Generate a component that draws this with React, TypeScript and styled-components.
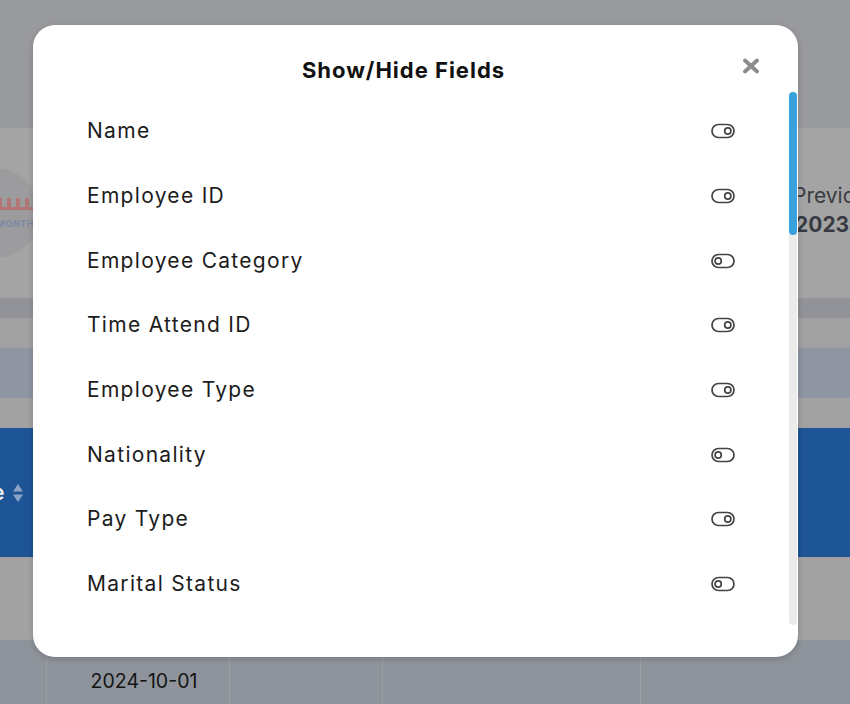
import React from "react";
import styled, { createGlobalStyle } from "styled-components";

const FONT = `Inter, "Open Sans", "Liberation Sans", sans-serif`;

const Global = createGlobalStyle`
  html, body { margin: 0; padding: 0; }
  body { font-family: ${FONT}; overflow: hidden; }
  #root { width: 850px; height: 704px; overflow: hidden; position: relative; }
`;

/* ---------- dimmed page behind the modal ---------- */
const Page = styled.div`
  width: 850px;
  height: 704px;
  display: flex;
  flex-direction: column;
  background: #999a9d;
`;

const Band = styled.div<{ $h: number; $bg: string }>`
  height: ${(p) => p.$h}px;
  flex: 0 0 auto;
  background: ${(p) => p.$bg};
`;

const CardRow = styled.div`
  height: 170px;
  flex: 0 0 auto;
  display: flex;
  align-items: center;
  justify-content: space-between;
  background: #a4a4a5;
  overflow: hidden;
`;

const LogoCircle = styled.div`
  width: 90px;
  height: 90px;
  margin-left: -50px;
  border-radius: 50%;
  background: #9c9c9e;
  display: flex;
  flex-direction: column;
  align-items: flex-end;
  justify-content: center;
  padding-right: 6px;
  box-sizing: border-box;
  gap: 8px;
`;

const LogoCrown = styled.div`
  width: 36px;
  height: 9px;
  border-bottom: 3px solid #b27676;
  background: repeating-linear-gradient(90deg, #b27676 0 4px, transparent 4px 9px);
`;

const LogoText = styled.span`
  font-size: 9px;
  font-weight: 700;
  color: #7d8aa6;
  letter-spacing: 0.5px;
`;

const Prev = styled.div`
  width: 57px;
  margin-top: -6px;
  display: flex;
  flex-direction: column;
  gap: 4px;
  white-space: nowrap;
  color: #383b42;
  font-size: 21px;
  overflow: hidden;
`;

const PrevYear = styled.span`
  font-weight: 700;
  margin-left: 2px;
`;

const SplitBand = styled.div`
  height: 110px;
  flex: 0 0 auto;
  display: flex;
  flex-direction: column;
  background: #a1a1a2;
`;

const SubBand = styled.div`
  margin-top: 30px;
  height: 50px;
  background: #8f95a1;
`;

const BlueHeader = styled.div`
  height: 129px;
  flex: 0 0 auto;
  background: #1d5597;
  display: flex;
  align-items: center;
  gap: 8px;
  color: #f2f2f2;
  font-size: 21px;
  font-weight: 600;
  overflow: hidden;
`;

const HeaderText = styled.span`
  margin-left: -8px;
`;

const TableRow = styled.div`
  height: 64px;
  flex: 0 0 auto;
  display: grid;
  grid-template-columns: 47px 183px 153px 258px 1fr;
  background: #8f949c;
`;

const Cell = styled.div`
  border-right: 1px solid #9a9ea5;
  display: flex;
  align-items: flex-start;
  justify-content: center;
  padding-top: 29px;
  color: #141414;
  font-size: 19.5px;
  line-height: 24px;
  &:last-child { border-right: none; }
`;

const DateCell = styled(Cell)`
  padding-left: 12px;
`;

/* ---------- modal ---------- */
const Modal = styled.div`
  position: absolute;
  left: 33px;
  top: 25px;
  width: 765px;
  height: 632px;
  background: #ffffff;
  border-radius: 22px;
  box-shadow: 0 2px 6px rgba(0, 0, 0, 0.18);
  display: flex;
  flex-direction: column;
  box-sizing: border-box;
  padding-bottom: 32px;
`;

const Header = styled.div`
  height: 67px;
  flex: 0 0 auto;
  display: flex;
  align-items: flex-start;
  justify-content: center;
  padding-top: 31px;
  box-sizing: border-box;
  position: relative;
`;

const Title = styled.h2`
  margin: 0 24px 0 0;
  font-size: 22px;
  line-height: 28px;
  font-weight: 700;
  color: #111111;
  letter-spacing: 1px;
`;

const CloseBtn = styled.button`
  position: absolute;
  right: 37px;
  top: 31px;
  width: 20px;
  height: 20px;
  padding: 0;
  border: none;
  background: transparent;
  display: flex;
  align-items: center;
  justify-content: center;
  cursor: pointer;
`;

const Body = styled.div`
  flex: 1 1 auto;
  display: flex;
  min-height: 0;
`;

const List = styled.ul`
  list-style: none;
  margin: 0;
  padding: 7px 0 0 54px;
  flex: 1 1 auto;
  display: flex;
  flex-direction: column;
`;

const Row = styled.li`
  height: 64.7px;
  flex: 0 0 auto;
  display: flex;
  align-items: center;
  justify-content: space-between;
  padding-right: 53px;
`;

const Label = styled.span`
  font-size: 21px;
  font-weight: 400;
  color: #1c1c1c;
  letter-spacing: 1.3px;
  line-height: 24px;
`;

const Track = styled.div`
  width: 8px;
  margin-right: 1px;
  flex: 0 0 auto;
  background: #ebebeb;
  border-radius: 4px;
  display: flex;
  flex-direction: column;
`;

const Thumb = styled.div`
  height: 143px;
  background: #37a2dc;
  border-radius: 4px;
`;

const Toggle: React.FC<{ on: boolean }> = ({ on }) => (
  <svg width="26" height="16" viewBox="0 0 26 16" aria-hidden="true">
    <rect x="2" y="1.5" width="22" height="13" rx="6.5" fill="none" stroke="#444" strokeWidth="1.7" />
    <circle cx={on ? 17.8 : 8.2} cy="8" r="3.1" fill="none" stroke="#444" strokeWidth="1.7" />
  </svg>
);

const CloseIcon = () => (
  <svg width="18" height="16" viewBox="0 0 18 16" aria-hidden="true">
    <path d="M3 2.5 L15 13.5 M15 2.5 L3 13.5" stroke="#8b8b8b" strokeWidth="3.8" strokeLinecap="round" />
  </svg>
);

const SortIcon = () => (
  <svg width="12" height="20" viewBox="0 0 12 20" aria-hidden="true">
    <path d="M6 1 L11 8.5 H1 Z M6 19 L11 11.5 H1 Z" fill="#8aa3c6" />
  </svg>
);

const fields: { name: string; on: boolean }[] = [
  { name: "Name", on: true },
  { name: "Employee ID", on: true },
  { name: "Employee Category", on: false },
  { name: "Time Attend ID", on: true },
  { name: "Employee Type", on: true },
  { name: "Nationality", on: false },
  { name: "Pay Type", on: true },
  { name: "Marital Status", on: false },
];

export default function App() {
  return (
    <>
      <Global />
      <Page>
        <Band $h={128} $bg="#999a9d" />
        <CardRow>
          <LogoCircle>
            <LogoCrown />
            <LogoText>MONTH</LogoText>
          </LogoCircle>
          <Prev>
            <span>Previous</span>
            <PrevYear>2023</PrevYear>
          </Prev>
        </CardRow>
        <Band $h={20} $bg="#929398" />
        <SplitBand>
          <SubBand />
        </SplitBand>
        <BlueHeader>
          <HeaderText>e</HeaderText>
          <SortIcon />
        </BlueHeader>
        <Band $h={83} $bg="#a2a2a2" />
        <TableRow>
          <Cell />
          <DateCell>2024-10-01</DateCell>
          <Cell />
          <Cell />
          <Cell />
        </TableRow>
      </Page>

      <Modal role="dialog" aria-label="Show/Hide Fields">
        <Header>
          <Title>Show/Hide Fields</Title>
          <CloseBtn aria-label="Close">
            <CloseIcon />
          </CloseBtn>
        </Header>
        <Body>
          <List>
            {fields.map((f) => (
              <Row key={f.name}>
                <Label>{f.name}</Label>
                <Toggle on={f.on} />
              </Row>
            ))}
          </List>
          <Track>
            <Thumb />
          </Track>
        </Body>
      </Modal>
    </>
  );
}
